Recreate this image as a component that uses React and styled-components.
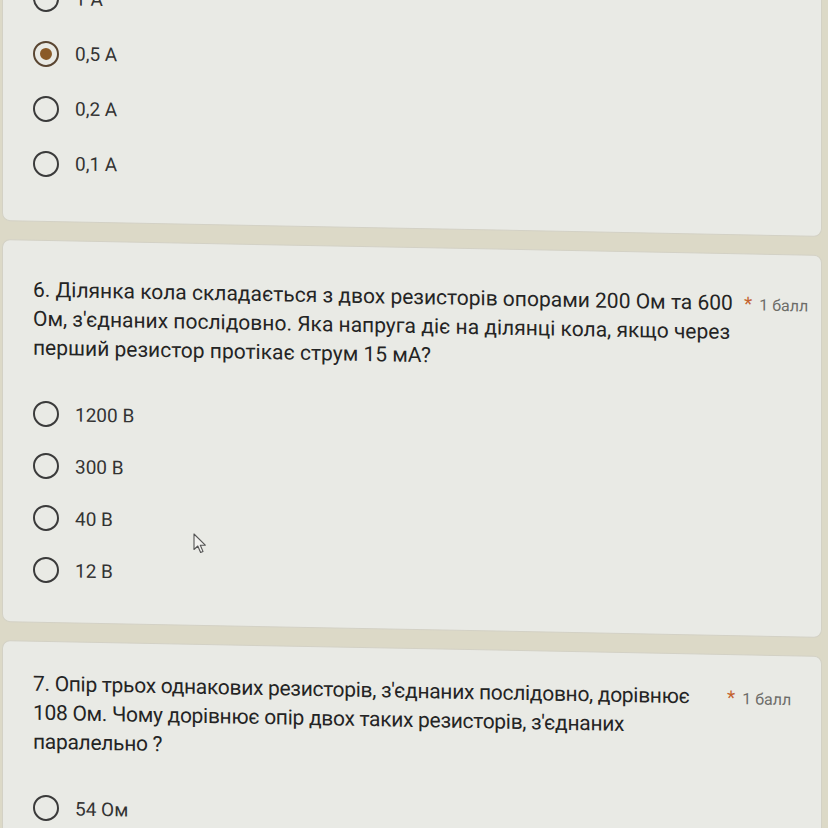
import React from "react";
import styled, { createGlobalStyle } from "styled-components";

const GlobalStyle = createGlobalStyle`
  html, body {
    margin: 0;
    background: #dcd9c7;
  }
  body {
    font-family: Roboto, "Noto Sans", "Liberation Sans", sans-serif;
  }
`;

const Screen = styled.div`
  position: relative;
  width: 828px;
  height: 828px;
  overflow: hidden;
  background: #dcd9c7;
`;

// the photo is shot at a slight angle, rows drop towards the right
const Page = styled.div`
  display: flex;
  flex-direction: column;
  gap: 18px;
  margin-top: -61px;
  padding: 0 6px 0 2px;
  transform: skewY(1.1deg);
  transform-origin: 0 0;
`;

const Card = styled.section`
  background: #e9eae5;
  border: 1px solid #d3d1c5;
  border-radius: 8px;
  padding: ${(p) => p.$pad};
`;

const Header = styled.div`
  display: flex;
  align-items: flex-start;
  gap: 12px;
`;

const Title = styled.h2`
  margin: 0;
  width: ${(p) => p.$w}px;
  flex: 0 0 auto;
  font-size: 21px;
  font-weight: 400;
  line-height: 29px;
  letter-spacing: ${(p) => p.$ls || 0}px;
  color: #242424;
  white-space: nowrap;
`;

const Points = styled.div`
  display: flex;
  align-items: baseline;
  gap: 7px;
  line-height: 29px;
  white-space: nowrap;
`;

const Star = styled.span`
  color: #c4632f;
  font-size: 19px;
`;

const Score = styled.span`
  color: #6d6d69;
  font-size: 16px;
`;

const OptionList = styled.div`
  display: flex;
  flex-direction: column;
  margin-top: ${(p) => p.$gap || 0}px;
`;

const Option = styled.label`
  display: flex;
  align-items: center;
  gap: 16px;
  height: ${(p) => p.$row}px;
`;

const Radio = styled.span`
  width: 26px;
  height: 26px;
  box-sizing: border-box;
  border-radius: 50%;
  border: 2px solid ${(p) => (p.$checked ? "#5a4632" : "#3b3b3b")};
  display: grid;
  place-items: center;

  &::after {
    content: "";
    display: ${(p) => (p.$checked ? "block" : "none")};
    width: 12px;
    height: 12px;
    border-radius: 50%;
    background: #8a5a28;
  }
`;

const OptionText = styled.span`
  font-size: 19px;
  color: #333;
`;

const Cursor = styled.svg`
  position: absolute;
  left: 193px;
  top: 533px;
  width: 15px;
  height: 21px;
`;

const questions = [
  {
    id: 6,
    width: 699,
    pad: "35px 0 26px 30px",
    lines: [
      "6. Ділянка кола складається з двох резисторів опорами 200 Ом та 600",
      "Ом, з'єднаних послідовно. Яка напруга діє на ділянці кола, якщо через",
      "перший резистор протікає струм 15 мА?",
    ],
    options: ["1200 В", "300 В", "40 В", "12 В"],
  },
  {
    id: 7,
    width: 682,
    ls: -0.3,
    pad: "28px 0 40px 30px",
    lines: [
      "7. Опір трьох однакових резисторів, з'єднаних послідовно, дорівнює",
      "108 Ом. Чому дорівнює опір двох таких резисторів, з'єднаних",
      "паралельно ?",
    ],
    options: ["54 Ом"],
  },
];

function Choice({ text, checked, row }) {
  return (
    <Option $row={row}>
      <Radio $checked={checked} />
      <OptionText>{text}</OptionText>
    </Option>
  );
}

export default function App() {
  const prev = ["1 А", "0,5 А", "0,2 А", "0,1 А"];

  return (
    <Screen>
      <GlobalStyle />
      <Page>
        <Card $pad="30px 0 30px 30px">
          <OptionList>
            {prev.map((o) => (
              <Choice key={o} text={o} row={55} checked={o === "0,5 А"} />
            ))}
          </OptionList>
        </Card>

        {questions.map((q) => (
          <Card key={q.id} $pad={q.pad}>
            <Header>
              <Title $w={q.width} $ls={q.ls}>
                {q.lines.map((l, i) => (
                  <React.Fragment key={i}>
                    {l}
                    {i < q.lines.length - 1 && <br />}
                  </React.Fragment>
                ))}
              </Title>
              <Points>
                <Star>*</Star>
                <Score>1 балл</Score>
              </Points>
            </Header>
            <OptionList $gap={25}>
              {q.options.map((o) => (
                <Choice key={o} text={o} row={52} />
              ))}
            </OptionList>
          </Card>
        ))}
      </Page>

      <Cursor viewBox="0 0 15 21">
        <path
          d="M1 1 L1 16.5 L4.8 13 L7.6 19.5 L10 18.4 L7.3 12.2 L12.3 12.2 Z"
          fill="#f2f2ef"
          stroke="#555"
          strokeWidth="1.1"
          strokeLinejoin="round"
        />
      </Cursor>
    </Screen>
  );
}
